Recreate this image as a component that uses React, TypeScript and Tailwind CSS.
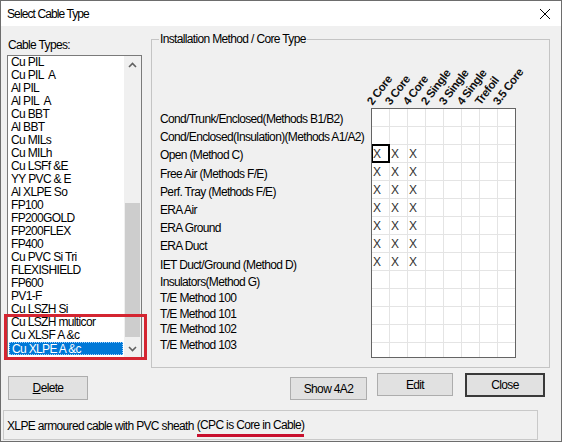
import React from 'react';

const cableTypes = [
  'Cu PIL',
  'Cu PIL  A',
  'Al PIL',
  'Al PIL  A',
  'Cu BBT',
  'Al BBT',
  'Cu MILs',
  'Cu MILh',
  'Cu LSFf &E',
  'YY PVC & E',
  'Al XLPE So',
  'FP100',
  'FP200GOLD',
  'FP200FLEX',
  'FP400',
  'Cu PVC Si Tri',
  'FLEXISHIELD',
  'FP600',
  'PV1-F',
  'Cu LSZH Si',
  'Cu LSZH multicor',
  'Cu XLSF A &c',
  'Cu XLPE A &c',
];

const methods = [
  { label: 'Cond/Trunk/Enclosed(Methods B1/B2)', h: 'h-[18.2px]' },
  { label: 'Cond/Enclosed(Insulation)(Methods A1/A2)', h: 'h-[18.2px]' },
  { label: 'Open (Method C)', h: 'h-[18.2px]' },
  { label: 'Free Air (Methods F/E)', h: 'h-[18.2px]' },
  { label: 'Perf. Tray (Methods F/E)', h: 'h-[18.2px]' },
  { label: 'ERA Air', h: 'h-[18.2px]' },
  { label: 'ERA Ground', h: 'h-[18.2px]' },
  { label: 'ERA Duct', h: 'h-[18.2px]' },
  { label: 'IET Duct/Ground (Method D)', h: 'h-[18.2px]' },
  { label: 'Insulators(Method G)', h: 'h-[16.2px]' },
  { label: 'T/E Method 100', h: 'h-[15.8px]' },
  { label: 'T/E Method 101', h: 'h-[15.8px]' },
  { label: 'T/E Method 102', h: 'h-[15.8px]' },
  { label: 'T/E Method 103', h: 'h-[15.8px]' },
];

const coreTypes = [
  { label: '2 Core', pos: 'left-[3px]' },
  { label: '3 Core', pos: 'left-[21px]' },
  { label: '4 Core', pos: 'left-[39px]' },
  { label: '2 Single', pos: 'left-[57px]' },
  { label: '3 Single', pos: 'left-[75px]' },
  { label: '4 Single', pos: 'left-[93px]' },
  { label: 'Trefoil', pos: 'left-[111px]' },
  { label: '3.5 Core', pos: 'left-[129px]' },
];

// rows 2..8 have the first three core types available
const isMarked = (row: number, col: number) => row >= 2 && row <= 8 && col <= 2;

const Chevron = ({ up }: { up?: boolean }) => (
  <svg width="9" height="6" viewBox="0 0 9 6">
    <polyline
      points={up ? '1,5 4.5,1.5 8,5' : '1,1 4.5,4.5 8,1'}
      fill="none"
      stroke="#606060"
      strokeWidth="1.6"
    />
  </svg>
);

const Button = ({ children, className }: { children: React.ReactNode; className: string }) => (
  <button className={`flex items-center justify-center bg-[#e1e1e1] text-black ${className}`}>
    {children}
  </button>
);

export default function App() {
  return (
    <div className="relative w-[562px] h-[442px] flex flex-col border border-[#6d6d6d] bg-[#f0f0f0] text-[12px] tracking-[-0.65px] text-black font-['Liberation_Sans',Arial,sans-serif] overflow-hidden">
      {/* Title bar */}
      <div className="h-[25px] bg-white flex items-center justify-between pl-[6px]">
        <span className="text-[12px] tracking-[-0.9px]">Select Cable Type</span>
        <svg width="12" height="12" viewBox="0 0 12 12" className="mr-[10px]">
          <path d="M1 1 L11 11 M11 1 L1 11" stroke="#000" strokeWidth="1" />
        </svg>
      </div>

      {/* Body */}
      <div className="flex flex-col flex-1">
        <div className="flex items-start">
          {/* Cable types list */}
          <div className="pl-[6px] pt-[12px] flex flex-col">
            <div className="h-[14px] leading-[14px] pl-[1px]">Cable Types:</div>
            <div className="mt-[3px] w-[135px] h-[303px] border border-[#7a7a7a] bg-white flex">
              <div className="flex-1 flex flex-col">
                {cableTypes.map((c, i) =>
                  i === cableTypes.length - 1 ? (
                    <div key={c} className="h-[13px] px-[1px]">
                      <div className="h-[13px] leading-[12px] bg-[#0078d7] text-white pl-[2px] border border-dotted border-[#9fd2ff] whitespace-pre">
                        {c}
                      </div>
                    </div>
                  ) : (
                    <div key={c} className="h-[13px] leading-[13px] pl-[3px] whitespace-pre">
                      {c}
                    </div>
                  )
                )}
              </div>
              <div className="w-[17px] bg-[#f0f0f0] flex flex-col">
                <div className="h-[17px] flex items-center justify-center">
                  <Chevron up />
                </div>
                <div className="flex-1 pt-[130px] px-[1px]">
                  <div className="h-[134px] bg-[#cdcdcd]" />
                </div>
                <div className="h-[17px] flex items-center justify-center">
                  <Chevron />
                </div>
              </div>
            </div>
          </div>

          {/* Installation method group */}
          <div className="relative ml-[9px] mt-[13px] w-[399px] h-[329px] border border-[#c4c4c4]">
            <span className="absolute left-[7px] top-[-8px] h-[14px] leading-[14px] px-[1px] bg-[#f0f0f0]">
              Installation Method / Core Type
            </span>
            <div className="flex pl-[8px]">
              <div className="w-[211px] pt-[70px] flex flex-col">
                {methods.map((m) => (
                  <div key={m.label} className={`${m.h} flex items-center whitespace-nowrap`}>
                    {m.label}
                  </div>
                ))}
              </div>
              <div className="flex flex-col">
                <div className="relative h-[68px]">
                  {coreTypes.map((c) => (
                    <span
                      key={c.label}
                      className={`absolute bottom-[1px] ${c.pos} origin-bottom-left rotate-[-53deg] whitespace-nowrap text-[11.5px] leading-[12px] font-bold tracking-[-0.4px] text-[#111]`}
                    >
                      {c.label}
                    </span>
                  ))}
                </div>
                <div className="w-[145px] h-[250px] border border-[#646464] bg-white overflow-hidden">
                  <div className="grid grid-cols-[repeat(8,18px)] auto-rows-[18px]">
                    {methods.map((m, r) =>
                      coreTypes.map((c, col) => (
                        <div
                          key={`${r}-${col}`}
                          className="relative border-r border-b border-[#e4e4e4] flex items-center pl-[1px] text-[#333]"
                        >
                          {isMarked(r, col) ? 'X' : ''}
                          {r === 2 && col === 0 && (
                            <div className="absolute -left-[1px] -top-[1px] w-[19px] h-[19px] border-2 border-black" />
                          )}
                        </div>
                      ))
                    )}
                  </div>
                </div>
              </div>
            </div>
          </div>
        </div>

        {/* Buttons */}
        <div className="flex items-start mt-[5px]">
          <Button className="ml-[7px] mt-[3px] w-[80px] h-[24px] border border-[#adadad]">
            <span>
              <span className="underline">D</span>elete
            </span>
          </Button>
          <div className="ml-auto mr-[16px] flex items-start">
            <Button className="mt-[4px] w-[77px] h-[23px] border border-[#adadad]">Show 4A2</Button>
            <Button className="ml-[10px] w-[76px] h-[23px] border border-[#adadad]">Edit</Button>
            <Button className="ml-[12px] w-[80px] h-[24px] border-2 border-[#3a3a3a]">Close</Button>
          </div>
        </div>

        {/* Status */}
        <div className="ml-[2px] mt-[10px] w-[535px] h-[30px] border border-[#c9c9c9] flex items-center pl-[3px] pt-[2px] whitespace-nowrap">
          XLPE armoured cable with PVC sheath{' '}
          <span className="ml-[3px] border-b-[3px] border-[#c8102e]">(CPC is Core in Cable)</span>
        </div>
      </div>

      {/* Annotation box around the selected list items */}
      <div className="absolute left-[3px] top-[313px] w-[143px] h-[46px] border-[3px] border-[#d42531]" />
    </div>
  );
}
